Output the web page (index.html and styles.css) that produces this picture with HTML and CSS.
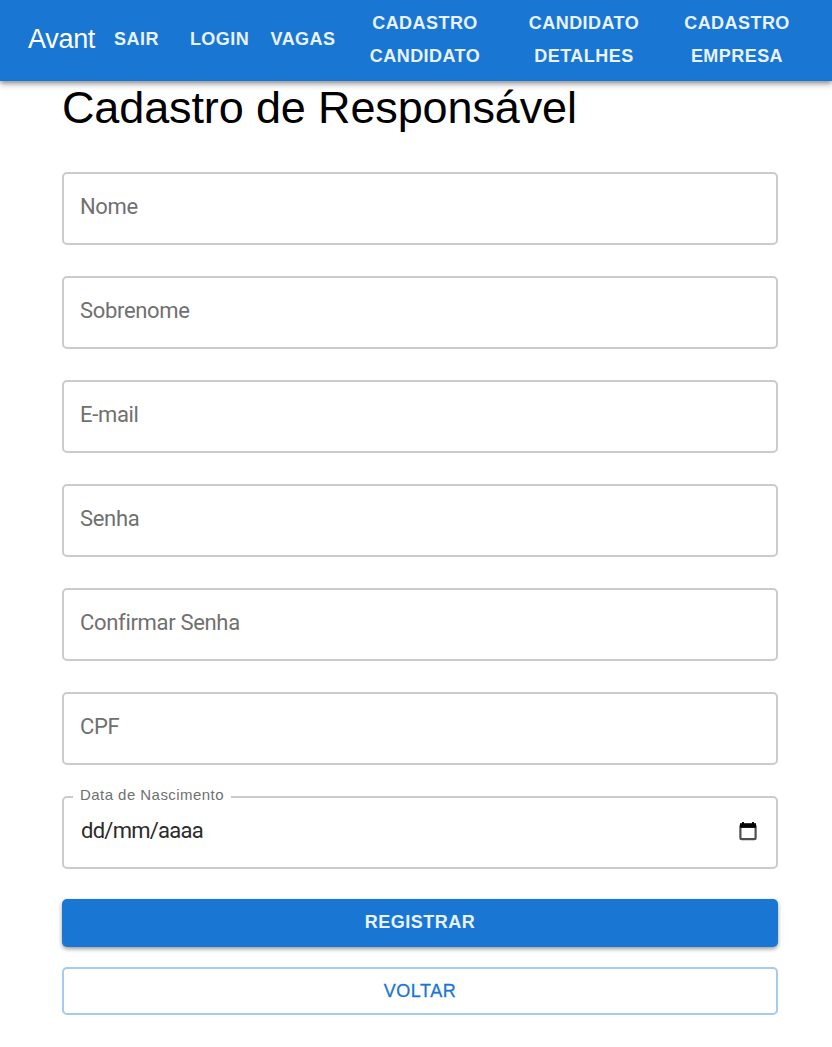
FILE: index.html
```html
<!DOCTYPE html>
<html lang="pt-BR">
<head>
<meta charset="utf-8">
<title>Cadastro de Responsável</title>
<link rel="stylesheet" href="styles.css">
</head>
<body>
<header class="appbar">
  <div class="brand">Avant</div>
  <nav class="nav">
    <a class="nav-sair">SAIR</a>
    <a class="nav-login">LOGIN</a>
    <a class="nav-vagas">VAGAS</a>
    <a class="nav-cadastro">CADASTRO<br>CANDIDATO</a>
    <a class="nav-detalhes">CANDIDATO<br>DETALHES</a>
    <a class="nav-empresa">CADASTRO<br>EMPRESA</a>
  </nav>
</header>
<main class="page">
  <h1 class="title">Cadastro de Responsável</h1>
  <form class="form">
    <div class="field"><label>Nome</label></div>
    <div class="field"><label>Sobrenome</label></div>
    <div class="field"><label>E-mail</label></div>
    <div class="field"><label>Senha</label></div>
    <div class="field"><label>Confirmar Senha</label></div>
    <div class="field"><label>CPF</label></div>
    <div class="field date">
      <span class="legend">Data de Nascimento</span>
      <span class="value">dd/mm/aaaa</span>
      <svg class="calendar" width="18" height="20" viewBox="0 0 18 20"><path d="M4 1v3M14 1v3" stroke="#111" stroke-width="2"/><path d="M1 2.2h16v4.5H1z" fill="#050505"/><rect x="1.4" y="4" width="15.2" height="14.2" rx="1.4" fill="none" stroke="#505050" stroke-width="2.2"/><path d="M1 3h16v3.7H1z" fill="#050505"/></svg>
    </div>
    <button type="button" class="btn primary">REGISTRAR</button>
    <button type="button" class="btn outlined">VOLTAR</button>
  </form>
</main>
</body>
</html>
```
FILE: styles.css
```css
* { box-sizing: border-box; }
body { margin: 0; background: #fff; font-family: "Liberation Sans", Arial, sans-serif; color: #000; }
.appbar { display: flex; align-items: center; height: 81px; padding-left: 28px; background: #1976d2; color: #fff; box-shadow: 0 2px 5px rgba(0,0,0,.4), 0 4px 8px rgba(0,0,0,.12); }
.brand { width: 71px; font-size: 27px; line-height: 40px; letter-spacing: -.3px; margin-top: -3px; }
.nav { display: flex; align-items: center; margin-top: -2px; color: #e8f3ff; font-size: 18px; font-weight: 700; line-height: 33px; letter-spacing: .45px; text-align: center; }
.nav-sair { width: 75px; }
.nav-login { width: 91px; }
.nav-vagas { width: 76px; }
.nav-cadastro { width: 168px; }
.nav-detalhes { width: 150px; }
.nav-empresa { width: 156px; }
.page { padding: 0 54px 0 62px; }
.title { margin: 0; height: 91px; padding-top: 1px; font-size: 45px; font-weight: 400; line-height: 52px; letter-spacing: -.13px; }
.form { display: flex; flex-direction: column; gap: 31px; }
.field { display: flex; align-items: center; height: 73px; padding: 0 16px 4px; border: 2px solid #cbcbcb; border-radius: 5px; color: #707070; font: 22px/30px Roboto, sans-serif; letter-spacing: -.32px; }
.date { position: relative; color: #2b2b2b; justify-content: space-between; padding: 0 19px 4px 17px; }
.legend { position: absolute; top: -14px; left: 9px; padding: 0 7px; background: #fff; color: #707070; font: 15px/22px "Liberation Sans", Arial, sans-serif; letter-spacing: .45px; }
.value { letter-spacing: -.75px; }
.calendar { display: block; }
.btn { height: 48px; padding: 0; border: 0; border-radius: 5px; font: 700 18px/46px "Liberation Sans", Arial, sans-serif; letter-spacing: .5px; }
.primary { margin-top: -1px; background: #1976d2; color: #e8f3ff; box-shadow: 0 2px 4px rgba(0,0,0,.4); line-height: 44px; padding-bottom: 2px; }
.outlined { margin-top: -11px; border: 2px solid #a5cbed; background: #fff; color: #1976d2; line-height: 42px; padding-bottom: 1px; font-weight: 400; -webkit-text-stroke: .3px #1976d2; }
```
